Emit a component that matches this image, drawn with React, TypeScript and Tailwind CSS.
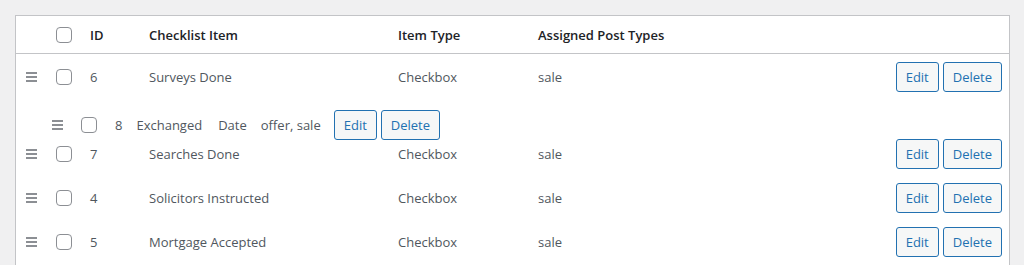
import React from "react";

interface ChecklistRow {
  id: number;
  name: string;
  type: string;
  posts: string;
}

const rowsTop: ChecklistRow[] = [{ id: 6, name: "Surveys Done", type: "Checkbox", posts: "sale" }];

const rowsBottom: ChecklistRow[] = [
  { id: 7, name: "Searches Done", type: "Checkbox", posts: "sale" },
  { id: 4, name: "Solicitors Instructed", type: "Checkbox", posts: "sale" },
  { id: 5, name: "Mortgage Accepted", type: "Checkbox", posts: "sale" },
];

const Handle = () => (
  <svg width="11" height="10" viewBox="0 0 11 10" className="block">
    <rect x="0" y="0" width="11" height="2" fill="#8c8f94" />
    <rect x="0" y="4" width="11" height="2" fill="#8c8f94" />
    <rect x="0" y="8" width="11" height="2" fill="#8c8f94" />
  </svg>
);

const Box = () => <span className="block w-4 h-4 rounded-[4px] border border-[#8c8f94] bg-white" />;

const SmallButton = ({ label }: { label: string }) => (
  <button className="h-[30px] px-[9px] pt-[1px] rounded-[3px] border border-[#2271b1] bg-[#f6f7f7] text-[#2271b1] text-[13px] leading-none">
    {label}
  </button>
);

const Row = ({ row }: { row: ChecklistRow }) => (
  <div className="flex items-center h-[44px] pt-[1px] text-[#50575e]">
    <div className="w-[40px] pl-[10px] shrink-0">
      <Handle />
    </div>
    <div className="w-[34px] shrink-0">
      <Box />
    </div>
    <div className="w-[59px] shrink-0 pt-[2px]">{row.id}</div>
    <div className="w-[249px] shrink-0 pt-[2px]">{row.name}</div>
    <div className="w-[140px] shrink-0 pt-[2px]">{row.type}</div>
    <div className="flex-1 pt-[2px]">{row.posts}</div>
    <div className="flex gap-1 pr-[7px]">
      <SmallButton label="Edit" />
      <SmallButton label="Delete" />
    </div>
  </div>
);

const App: React.FC = () => {
  return (
    <div className="w-[1024px] h-[265px] overflow-hidden bg-[#f0f0f1] pt-[15px] pl-[15px] pr-[14px] font-['Open_Sans',sans-serif] text-[13px]">
      <div className="border border-[#c3c4c7] bg-white h-[260px]">
        <div className="flex items-center h-[38px] pt-[1px] border-b border-[#c3c4c7] text-[#1d2327] font-semibold">
          <div className="w-[40px] shrink-0" />
          <div className="w-[34px] shrink-0">
            <Box />
          </div>
          <div className="w-[59px] shrink-0 pt-[2px]">ID</div>
          <div className="w-[249px] shrink-0 pt-[2px]">Checklist Item</div>
          <div className="w-[140px] shrink-0 pt-[2px]">Item Type</div>
          <div className="flex-1 pt-[2px]">Assigned Post Types</div>
        </div>

        {rowsTop.map((r) => (
          <Row key={r.id} row={r} />
        ))}

        <div className="relative z-10 h-[33px] pt-[12px] pl-[36px] flex items-start text-[#50575e]">
          <div className="flex items-center h-[30px]">
            <Handle />
            <span className="ml-[18px]">
              <Box />
            </span>
            <span className="ml-[18px] pt-[2px]">8</span>
            <span className="ml-[14px] pt-[2px]">Exchanged</span>
            <span className="ml-[16px] pt-[2px]">Date</span>
            <span className="ml-[14px] pt-[2px]">offer, sale</span>
            <span className="ml-[13px] flex gap-1">
              <SmallButton label="Edit" />
              <SmallButton label="Delete" />
            </span>
          </div>
        </div>

        {rowsBottom.map((r) => (
          <Row key={r.id} row={r} />
        ))}
      </div>
    </div>
  );
};

export default App;
